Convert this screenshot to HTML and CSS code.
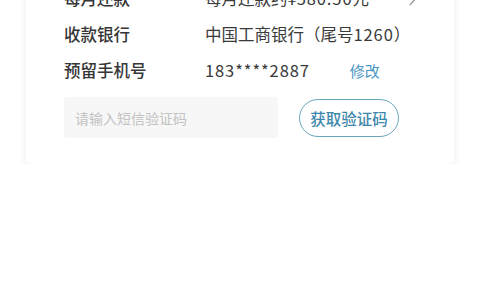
FILE: index.html
```html
<!DOCTYPE html>
<html lang="zh-CN">
<head>
<meta charset="utf-8">
<link rel="stylesheet" href="styles.css">
</head>
<body>
<div class="card">
  <div class="row">
    <span class="label">每月还款</span>
    <span class="value">每月还款约¥<span class="num">580.50</span>元</span>
    <span class="chev"><svg width="10" height="16" viewBox="0 0 10 16"><path d="M2 1 L8 8 L2 15" fill="none" stroke="#999" stroke-width="1.4"/></svg></span>
  </div>
  <div class="row">
    <span class="label">收款银行</span>
    <span class="value">中国工商银行（尾号<span class="num">1260</span>）</span>
  </div>
  <div class="row">
    <span class="label">预留手机号</span>
    <span class="value num">183****2887</span>
    <span class="link">修改</span>
  </div>
  <div class="form">
    <div class="input">请输入短信验证码</div>
    <div class="btn">获取验证码</div>
  </div>
</div>
</body>
</html>
```
FILE: styles.css
```css
html, body {
  margin: 0;
  padding: 0;
  background: #ffffff;
}
body {
  font-family: "Noto Sans CJK SC", "Noto Sans", sans-serif;
  color: #333333;
  overflow: hidden;
}
.card {
  margin: -40px 26px 0 26px;
  padding: 20px 0 26px 38px;
  background: #ffffff;
  border-radius: 6px;
  box-shadow: 0 2px 10px rgba(0, 0, 0, 0.09);
}
.row {
  display: flex;
  align-items: center;
  height: 36px;
  font-size: 16.5px;
}
.label {
  width: 141px;
  font-weight: 500;
  color: #363636;
}
.value {
  color: #3a3a3a;
}
.num {
  letter-spacing: 0.9px;
}
.chev {
  margin-left: auto;
  margin-right: 36px;
  display: flex;
}
.link {
  margin-left: 40px;
  color: #4a96c2;
  font-size: 15px;
}
.form {
  display: flex;
  align-items: center;
  margin-top: 9px;
}
.input {
  width: 203px;
  height: 41px;
  padding-left: 11px;
  background: #f7f7f7;
  border-radius: 2px;
  font-size: 14px;
  color: #c2c2c2;
  display: flex;
  align-items: center;
}
.btn {
  margin-left: 21px;
  width: 98px;
  height: 36px;
  border: 1.5px solid #6aa6ba;
  border-radius: 20px;
  display: flex;
  align-items: center;
  justify-content: center;
  font-size: 15.5px;
  font-weight: 500;
  color: #3f88ad;
}
```
